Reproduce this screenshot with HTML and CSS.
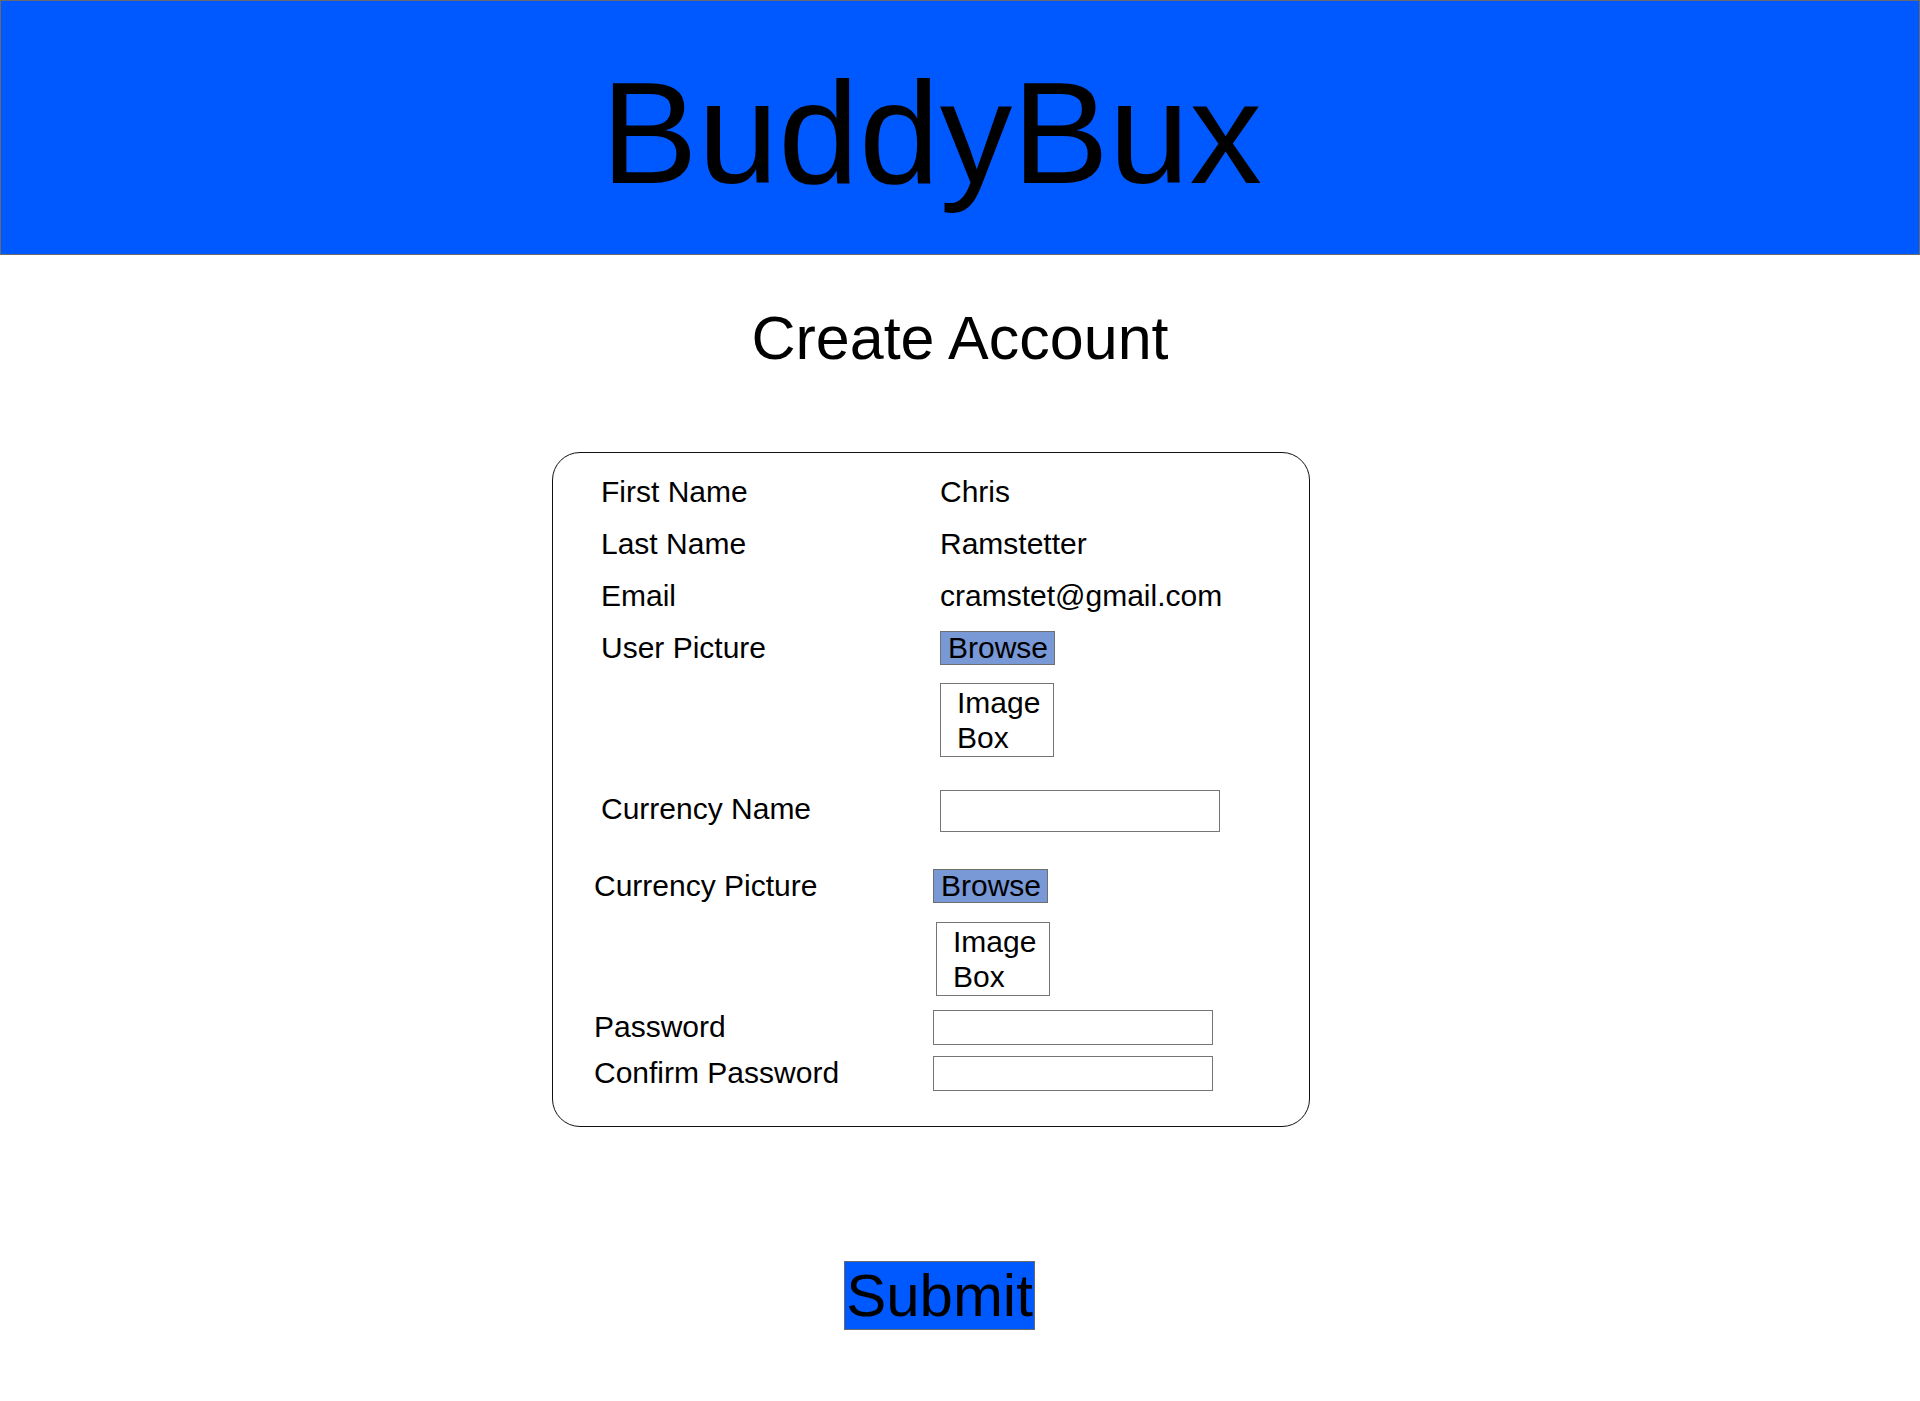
FILE: index.html
```html
<!DOCTYPE html>
<html lang="en">
<head>
<meta charset="utf-8">
<title>BuddyBux - Create Account</title>
<link rel="stylesheet" href="styles.css">
</head>
<body>
<header class="banner">
  <h1 class="brand">BuddyBux</h1>
</header>
<main class="page">
  <h2 class="title">Create Account</h2>
  <form class="card">
    <div class="group group-a">
      <div class="row row-first"><span class="label">First Name</span><span class="value">Chris</span></div>
      <div class="row"><span class="label">Last Name</span><span class="value">Ramstetter</span></div>
      <div class="row"><span class="label">Email</span><span class="value">cramstet@gmail.com</span></div>
      <div class="row"><span class="label">User Picture</span><span class="value"><span class="browse">Browse</span></span></div>
      <div class="row"><span class="label"></span><div class="image-box">Image<br>Box</div></div>
      <div class="row row-currency"><span class="label label-pad">Currency Name</span><span class="field field-tall"></span></div>
    </div>
    <div class="group group-b">
      <div class="row row-cpic"><span class="label">Currency Picture</span><span class="value"><span class="browse">Browse</span></span></div>
      <div class="row row-img2"><span class="label"></span><div class="image-box image-box-shift">Image<br>Box</div></div>
      <div class="row row-pass"><span class="label">Password</span><span class="field"></span></div>
      <div class="row row-confirm"><span class="label">Confirm Password</span><span class="field"></span></div>
    </div>
  </form>
  <div class="actions">
    <button type="button" class="submit">Submit</button>
  </div>
</main>
</body>
</html>
```

FILE: styles.css
```css
html, body {
  margin: 0;
  padding: 0;
  background: #ffffff;
}

body {
  font-family: "Liberation Sans", Arial, Helvetica, sans-serif;
  color: #000000;
}

.banner {
  box-sizing: border-box;
  height: 255px;
  background: #0059ff;
  border: 1px solid #6a6a6a;
  display: flex;
  justify-content: center;
  padding-top: 51px;
  padding-right: 57px;
}

.brand {
  margin: 0;
  font-size: 145px;
  line-height: 163px;
  font-weight: normal;
}

.page {
  display: flex;
  flex-direction: column;
}

.title {
  margin: 48px 0 0;
  text-align: center;
  font-size: 61px;
  line-height: 70px;
  font-weight: normal;
}

.card {
  box-sizing: border-box;
  width: 758px;
  margin: 79px 0 0 calc(50% - 408px);
  border: 1px solid #111111;
  border-radius: 28px;
  padding: 22px 0 35px 48px;
  font-size: 30px;
  line-height: 34px;
}

.group-b {
  margin-left: -7px;
}

.row {
  display: grid;
  grid-template-columns: 339px auto;
  align-items: start;
  margin-top: 18px;
}

.row-first {
  margin-top: 0;
}

.row-currency {
  margin-top: 33px;
}

.row-cpic {
  margin-top: 37px;
}

.row-img2 {
  margin-top: 19px;
}

.row-pass {
  margin-top: 14px;
}

.row-confirm {
  margin-top: 11px;
}

.label,
.value {
  white-space: nowrap;
}

.label-pad {
  padding-top: 2px;
}

.browse {
  display: inline-block;
  box-sizing: border-box;
  height: 34px;
  padding: 0 6px 0 7px;
  line-height: 32px;
  background: #7898d6;
  border: 1px solid #6f6f6f;
}

.image-box {
  box-sizing: border-box;
  width: 114px;
  height: 74px;
  padding: 1px 0 1px 16px;
  line-height: 35px;
  border: 1px solid #757575;
}

.image-box-shift {
  margin-left: 3px;
}

.field {
  display: block;
  box-sizing: border-box;
  width: 280px;
  height: 35px;
  border: 1px solid #757575;
  background: #ffffff;
}

.field-tall {
  height: 42px;
}

.actions {
  display: flex;
  justify-content: center;
  margin-top: 134px;
  padding-right: 41px;
}

.submit {
  box-sizing: border-box;
  margin: 0;
  height: 69px;
  padding: 0 1px;
  font-family: "Liberation Sans", Arial, Helvetica, sans-serif;
  font-size: 60px;
  line-height: 67px;
  color: #000000;
  background: #0059ff;
  border: 1px solid #6a6a6a;
  border-radius: 0;
  cursor: pointer;
}
```
